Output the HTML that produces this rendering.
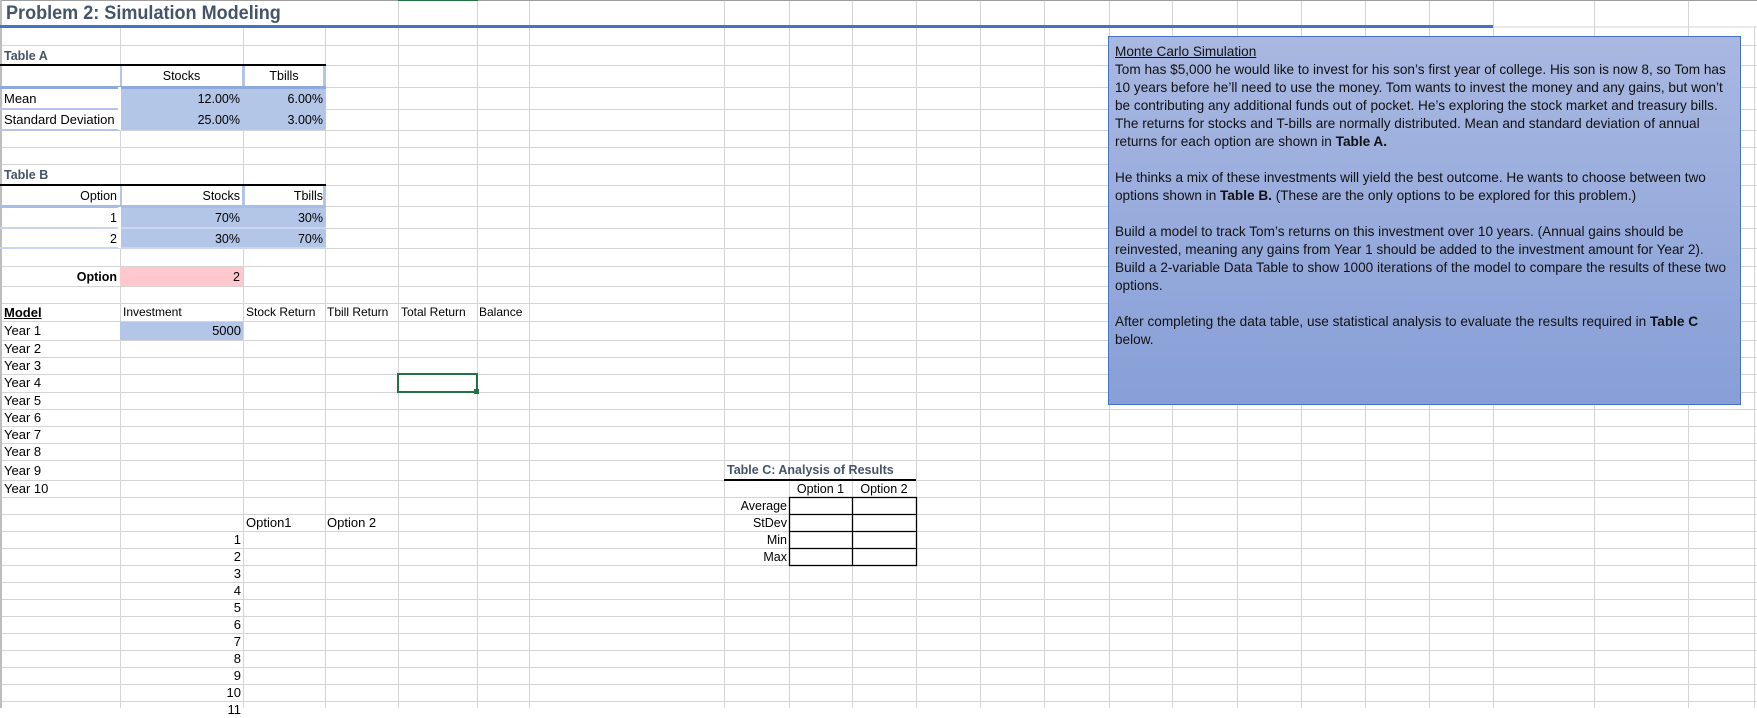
<!DOCTYPE html>
<html><head><meta charset="utf-8">
<style>
*{margin:0;padding:0;box-sizing:border-box}
body{width:1757px;height:708px;overflow:hidden;background:#fff;position:relative;font-family:"Liberation Sans",Arial,sans-serif;font-size:13px;color:#000}
.a{position:absolute;white-space:nowrap}
.r{text-align:right}
.c{text-align:center}
.cal{font-size:12.5px}
.hd{font-weight:bold;color:#44546a;font-size:12.5px}
.f{position:absolute}
#tb{position:absolute;left:1108px;top:36px;width:633px;height:369px;border:1px solid #4472c4;background:linear-gradient(#a9b8e1,#879fd7);font-size:13.6px;letter-spacing:0;color:#111;padding:6px 0 0 6px;line-height:18px}
#tb div{white-space:nowrap;height:18px}
</style></head><body>
<svg class="f" style="left:0;top:0" width="1757" height="708">
<g stroke="#d4d4d4" stroke-width="1">
<line x1="120.5" y1="0" x2="120.5" y2="708"/><line x1="243.5" y1="0" x2="243.5" y2="708"/><line x1="325.5" y1="0" x2="325.5" y2="708"/><line x1="398.5" y1="0" x2="398.5" y2="708"/><line x1="477.5" y1="0" x2="477.5" y2="708"/><line x1="529.5" y1="0" x2="529.5" y2="708"/><line x1="724.5" y1="0" x2="724.5" y2="708"/><line x1="789.5" y1="0" x2="789.5" y2="708"/><line x1="852.5" y1="0" x2="852.5" y2="708"/><line x1="916.5" y1="0" x2="916.5" y2="708"/><line x1="980.5" y1="0" x2="980.5" y2="708"/><line x1="1044.5" y1="0" x2="1044.5" y2="708"/><line x1="1109.5" y1="0" x2="1109.5" y2="708"/><line x1="1172.5" y1="0" x2="1172.5" y2="708"/><line x1="1237.5" y1="0" x2="1237.5" y2="708"/><line x1="1301.5" y1="0" x2="1301.5" y2="708"/><line x1="1365.5" y1="0" x2="1365.5" y2="708"/><line x1="1429.5" y1="0" x2="1429.5" y2="708"/><line x1="1493.5" y1="0" x2="1493.5" y2="708"/><line x1="1594.5" y1="0" x2="1594.5" y2="708"/><line x1="1688.5" y1="0" x2="1688.5" y2="708"/><line x1="1754.5" y1="0" x2="1754.5" y2="708"/>
<line x1="0" y1="45.5" x2="1757" y2="45.5"/><line x1="0" y1="65.5" x2="1757" y2="65.5"/><line x1="0" y1="87.5" x2="1757" y2="87.5"/><line x1="0" y1="109.5" x2="1757" y2="109.5"/><line x1="0" y1="130.5" x2="1757" y2="130.5"/><line x1="0" y1="147.5" x2="1757" y2="147.5"/><line x1="0" y1="164.5" x2="1757" y2="164.5"/><line x1="0" y1="185.5" x2="1757" y2="185.5"/><line x1="0" y1="206.5" x2="1757" y2="206.5"/><line x1="0" y1="228.5" x2="1757" y2="228.5"/><line x1="0" y1="248.5" x2="1757" y2="248.5"/><line x1="0" y1="266.5" x2="1757" y2="266.5"/><line x1="0" y1="286.5" x2="1757" y2="286.5"/><line x1="0" y1="303.5" x2="1757" y2="303.5"/><line x1="0" y1="321.5" x2="1757" y2="321.5"/><line x1="0" y1="340.5" x2="1757" y2="340.5"/><line x1="0" y1="357.5" x2="1757" y2="357.5"/><line x1="0" y1="374.5" x2="1757" y2="374.5"/><line x1="0" y1="392.5" x2="1757" y2="392.5"/><line x1="0" y1="409.5" x2="1757" y2="409.5"/><line x1="0" y1="426.5" x2="1757" y2="426.5"/><line x1="0" y1="443.5" x2="1757" y2="443.5"/><line x1="0" y1="460.5" x2="1757" y2="460.5"/><line x1="0" y1="480.5" x2="1757" y2="480.5"/><line x1="0" y1="497.5" x2="1757" y2="497.5"/><line x1="0" y1="514.5" x2="1757" y2="514.5"/><line x1="0" y1="531.5" x2="1757" y2="531.5"/><line x1="0" y1="548.5" x2="1757" y2="548.5"/><line x1="0" y1="565.5" x2="1757" y2="565.5"/><line x1="0" y1="582.5" x2="1757" y2="582.5"/><line x1="0" y1="599.5" x2="1757" y2="599.5"/><line x1="0" y1="616.5" x2="1757" y2="616.5"/><line x1="0" y1="633.5" x2="1757" y2="633.5"/><line x1="0" y1="650.5" x2="1757" y2="650.5"/><line x1="0" y1="667.5" x2="1757" y2="667.5"/><line x1="0" y1="684.5" x2="1757" y2="684.5"/><line x1="0" y1="701.5" x2="1757" y2="701.5"/>
</g>
<rect x="0" y="1" width="1757" height="25" fill="#fff"/>
<g stroke="#d4d4d4"><line x1="398.5" y1="0" x2="398.5" y2="26"/><line x1="477.5" y1="0" x2="477.5" y2="26"/><line x1="529.5" y1="0" x2="529.5" y2="26"/><line x1="724.5" y1="0" x2="724.5" y2="26"/><line x1="789.5" y1="0" x2="789.5" y2="26"/><line x1="852.5" y1="0" x2="852.5" y2="26"/><line x1="916.5" y1="0" x2="916.5" y2="26"/><line x1="980.5" y1="0" x2="980.5" y2="26"/><line x1="1044.5" y1="0" x2="1044.5" y2="26"/><line x1="1109.5" y1="0" x2="1109.5" y2="26"/><line x1="1172.5" y1="0" x2="1172.5" y2="26"/><line x1="1237.5" y1="0" x2="1237.5" y2="26"/><line x1="1301.5" y1="0" x2="1301.5" y2="26"/><line x1="1365.5" y1="0" x2="1365.5" y2="26"/><line x1="1429.5" y1="0" x2="1429.5" y2="26"/><line x1="1493.5" y1="0" x2="1493.5" y2="26"/><line x1="1594.5" y1="0" x2="1594.5" y2="26"/><line x1="1688.5" y1="0" x2="1688.5" y2="26"/><line x1="0" y1="27" x2="1757" y2="27"/></g>
<rect x="0" y="0" width="1757" height="1" fill="#9e9e9e"/>
<rect x="398" y="0" width="80" height="1" fill="#217346"/>
<rect x="0" y="0" width="2" height="708" fill="#bdbdbd"/>
<rect x="0" y="25" width="1493" height="3" fill="#4472c4"/>
<rect x="120" y="88" width="206" height="42" fill="#b4c6e7"/>
<rect x="120" y="65" width="2" height="23" fill="#b4c6e7"/><rect x="242" y="65" width="3" height="23" fill="#b4c6e7"/><rect x="323" y="65" width="3" height="23" fill="#b4c6e7"/>
<rect x="0" y="86" width="326" height="3" fill="#8eaadb"/>
<rect x="0" y="108" width="120" height="2" fill="#b4c6e7"/><rect x="0" y="129" width="120" height="2" fill="#b4c6e7"/>
<rect x="118" y="87" width="3" height="43" fill="#fff"/>
<rect x="0" y="64" width="326" height="2" fill="#000"/>
<rect x="120" y="207" width="206" height="41" fill="#b4c6e7"/>
<rect x="120" y="185" width="2" height="22" fill="#b4c6e7"/><rect x="242" y="185" width="3" height="63" fill="#b4c6e7"/><rect x="323" y="185" width="3" height="22" fill="#b4c6e7"/>
<rect x="0" y="205" width="326" height="3" fill="#a6bde6"/>
<rect x="0" y="227" width="326" height="2" fill="#c9d6ee"/><rect x="0" y="247" width="326" height="2" fill="#c9d6ee"/>
<rect x="118" y="207" width="3" height="41" fill="#fff"/>
<rect x="0" y="184" width="326" height="2" fill="#000"/>
<rect x="120" y="267" width="123" height="19" fill="#ffc7ce"/>
<rect x="120" y="322" width="123" height="18" fill="#b4c6e7"/>
<rect x="398" y="374" width="79" height="18" fill="none" stroke="#217346" stroke-width="2"/>
<rect x="474" y="389" width="5" height="5" fill="#217346"/>
<rect x="724" y="479" width="192" height="2" fill="#000"/>
<g stroke="#000" stroke-width="1.3" fill="none"><rect x="789.5" y="497.5" width="127" height="68"/><line x1="852.5" y1="497" x2="852.5" y2="566"/><line x1="789" y1="514.5" x2="917" y2="514.5"/><line x1="789" y1="531.5" x2="917" y2="531.5"/><line x1="789" y1="548.5" x2="917" y2="548.5"/></g>
</svg>

<div class="a" style="left:6px;top:2px;font-size:19px;font-weight:bold;color:#44546a;line-height:24px;transform:scaleX(0.95);transform-origin:left">Problem 2: Simulation Modeling</div>

<div class="a hd" style="left:4px;top:47px;line-height:18px">Table A</div>
<div class="a cal c" style="left:120px;width:123px;top:66px;line-height:21px">Stocks</div>
<div class="a cal c" style="left:243px;width:82px;top:66px;line-height:21px">Tbills</div>
<div class="a" style="left:4px;top:88px;line-height:21px">Mean</div>
<div class="a" style="left:4px;top:109px;line-height:21px">Standard Deviation</div>
<div class="a cal r" style="left:120px;width:120px;top:89px;line-height:21px">12.00%</div>
<div class="a cal r" style="left:243px;width:80px;top:89px;line-height:21px">6.00%</div>
<div class="a cal r" style="left:120px;width:120px;top:110px;line-height:21px">25.00%</div>
<div class="a cal r" style="left:243px;width:80px;top:110px;line-height:21px">3.00%</div>

<div class="a hd" style="left:4px;top:166px;line-height:18px">Table B</div>
<div class="a cal r" style="left:0;width:117px;top:186px;line-height:20px">Option</div>
<div class="a cal r" style="left:120px;width:120px;top:186px;line-height:20px">Stocks</div>
<div class="a cal r" style="left:243px;width:80px;top:186px;line-height:20px">Tbills</div>
<div class="a cal r" style="left:0;width:117px;top:208px;line-height:20px">1</div>
<div class="a cal r" style="left:120px;width:120px;top:208px;line-height:20px">70%</div>
<div class="a cal r" style="left:243px;width:80px;top:208px;line-height:20px">30%</div>
<div class="a cal r" style="left:0;width:117px;top:229px;line-height:20px">2</div>
<div class="a cal r" style="left:120px;width:120px;top:229px;line-height:20px">30%</div>
<div class="a cal r" style="left:243px;width:80px;top:229px;line-height:20px">70%</div>

<div class="a cal r" style="left:0;width:117px;top:267px;line-height:20px;font-weight:bold">Option</div>
<div class="a cal r" style="left:120px;width:120px;top:267px;line-height:20px">2</div>

<div class="a" style="left:4px;top:304px;line-height:17px;font-weight:bold;text-decoration:underline">Model</div>
<div class="a" style="left:123px;top:304px;line-height:17px;font-size:12px">Investment</div>
<div class="a" style="left:246px;top:304px;line-height:17px;font-size:12px">Stock Return</div>
<div class="a" style="left:327px;top:304px;line-height:17px;font-size:12px">Tbill Return</div>
<div class="a" style="left:401px;top:304px;line-height:17px;font-size:12px">Total Return</div>
<div class="a" style="left:479px;top:304px;line-height:17px;font-size:12px">Balance</div>
<div class="a r" style="left:120px;width:121px;top:322px;line-height:18px">5000</div>
<div class="a" style="left:4px;top:322px;line-height:18px">Year 1</div>
<div class="a" style="left:4px;top:340px;line-height:17px">Year 2</div>
<div class="a" style="left:4px;top:357px;line-height:17px">Year 3</div>
<div class="a" style="left:4px;top:374px;line-height:18px">Year 4</div>
<div class="a" style="left:4px;top:392px;line-height:17px">Year 5</div>
<div class="a" style="left:4px;top:409px;line-height:17px">Year 6</div>
<div class="a" style="left:4px;top:426px;line-height:17px">Year 7</div>
<div class="a" style="left:4px;top:443px;line-height:17px">Year 8</div>
<div class="a" style="left:4px;top:461px;line-height:19px">Year 9</div>
<div class="a" style="left:4px;top:480px;line-height:17px">Year 10</div>

<div class="a" style="left:246px;top:514px;line-height:17px">Option1</div>
<div class="a" style="left:327px;top:514px;line-height:17px">Option 2</div>
<div class="a r" style="left:120px;width:121px;top:531px;line-height:17px">1</div>
<div class="a r" style="left:120px;width:121px;top:548px;line-height:17px">2</div>
<div class="a r" style="left:120px;width:121px;top:565px;line-height:17px">3</div>
<div class="a r" style="left:120px;width:121px;top:582px;line-height:17px">4</div>
<div class="a r" style="left:120px;width:121px;top:599px;line-height:17px">5</div>
<div class="a r" style="left:120px;width:121px;top:616px;line-height:17px">6</div>
<div class="a r" style="left:120px;width:121px;top:633px;line-height:17px">7</div>
<div class="a r" style="left:120px;width:121px;top:650px;line-height:17px">8</div>
<div class="a r" style="left:120px;width:121px;top:667px;line-height:17px">9</div>
<div class="a r" style="left:120px;width:121px;top:684px;line-height:17px">10</div>
<div class="a r" style="left:120px;width:121px;top:701px;line-height:17px">11</div>

<div class="a hd" style="left:727px;top:461px;line-height:19px">Table C: Analysis of Results</div>
<div class="a c" style="left:789px;width:63px;top:481px;line-height:16px;font-size:12.5px">Option 1</div>
<div class="a c" style="left:852px;width:64px;top:481px;line-height:16px;font-size:12.5px">Option 2</div>
<div class="a r" style="left:700px;width:87px;top:498px;line-height:17px;font-size:12.5px">Average</div>
<div class="a r" style="left:700px;width:87px;top:515px;line-height:17px;font-size:12.5px">StDev</div>
<div class="a r" style="left:700px;width:87px;top:532px;line-height:17px;font-size:12.5px">Min</div>
<div class="a r" style="left:700px;width:87px;top:549px;line-height:17px;font-size:12.5px">Max</div>

<div id="tb">
<div style="text-decoration:underline">Monte Carlo Simulation</div>
<div>Tom has $5,000 he would like to invest for his son’s first year of college. His son is now 8, so Tom has</div>
<div>10 years before he’ll need to use the money. Tom wants to invest the money and any gains, but won’t</div>
<div>be contributing any additional funds out of pocket. He’s exploring the stock market and treasury bills.</div>
<div>The returns for stocks and T-bills are normally distributed. Mean and standard deviation of annual</div>
<div>returns for each option are shown in <b>Table A.</b></div>
<div></div>
<div>He thinks a mix of these investments will yield the best outcome. He wants to choose between two</div>
<div>options shown in <b>Table B.</b> (These are the only options to be explored for this problem.)</div>
<div></div>
<div>Build a model to track Tom’s returns on this investment over 10 years. (Annual gains should be</div>
<div>reinvested, meaning any gains from Year 1 should be added to the investment amount for Year 2).</div>
<div>Build a 2-variable Data Table to show 1000 iterations of the model to compare the results of these two</div>
<div>options.</div>
<div></div>
<div>After completing the data table, use statistical analysis to evaluate the results required in <b>Table C</b></div>
<div>below.</div>
</div>
</body></html>
